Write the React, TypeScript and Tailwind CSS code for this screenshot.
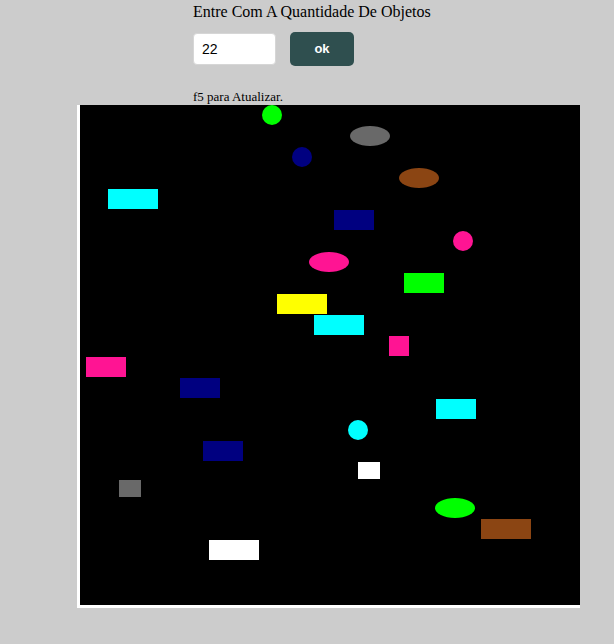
import React from 'react';

type Shape =
  | { kind: 'rect'; x: number; y: number; w: number; h: number; color: string }
  | { kind: 'ellipse'; cx: number; cy: number; rx: number; ry: number; color: string };

// coordenadas relativas ao canvas (500x500)
const shapes: Shape[] = [
  { kind: 'ellipse', cx: 192, cy: 10, rx: 10, ry: 10, color: '#00ff00' },
  { kind: 'ellipse', cx: 290, cy: 31, rx: 20, ry: 10, color: '#696969' },
  { kind: 'ellipse', cx: 222, cy: 52, rx: 10, ry: 10, color: '#000080' },
  { kind: 'ellipse', cx: 339, cy: 73, rx: 20, ry: 10, color: '#8b4513' },
  { kind: 'rect', x: 28, y: 84, w: 50, h: 20, color: '#00ffff' },
  { kind: 'rect', x: 254, y: 105, w: 40, h: 20, color: '#000080' },
  { kind: 'ellipse', cx: 383, cy: 136, rx: 10, ry: 10, color: '#ff1493' },
  { kind: 'ellipse', cx: 249, cy: 157, rx: 20, ry: 10, color: '#ff1493' },
  { kind: 'rect', x: 324, y: 168, w: 40, h: 20, color: '#00ff00' },
  { kind: 'rect', x: 197, y: 189, w: 50, h: 20, color: '#ffff00' },
  { kind: 'rect', x: 234, y: 210, w: 50, h: 20, color: '#00ffff' },
  { kind: 'rect', x: 309, y: 231, w: 20, h: 20, color: '#ff1493' },
  { kind: 'rect', x: 6, y: 252, w: 40, h: 20, color: '#ff1493' },
  { kind: 'rect', x: 100, y: 273, w: 40, h: 20, color: '#000080' },
  { kind: 'rect', x: 356, y: 294, w: 40, h: 20, color: '#00ffff' },
  { kind: 'ellipse', cx: 278, cy: 325, rx: 10, ry: 10, color: '#00ffff' },
  { kind: 'rect', x: 123, y: 336, w: 40, h: 20, color: '#000080' },
  { kind: 'rect', x: 278, y: 357, w: 22, h: 17, color: '#ffffff' },
  { kind: 'rect', x: 39, y: 375, w: 22, h: 17, color: '#696969' },
  { kind: 'ellipse', cx: 375, cy: 403, rx: 20, ry: 10, color: '#00ff00' },
  { kind: 'rect', x: 401, y: 414, w: 50, h: 20, color: '#8b4513' },
  { kind: 'rect', x: 129, y: 435, w: 50, h: 20, color: '#ffffff' },
];

export default function App() {
  return (
    <div className="min-h-screen bg-[#cccccc] pb-[36px]">
      {/* Formulario */}
      <div className="pl-[193px] pt-[3px]">
        <h1 className="text-[16px] leading-[18px] text-black font-['Liberation_Serif',serif]">
          Entre Com A Quantidade De Objetos
        </h1>
        <div className="mt-[11px] flex items-center gap-[14px]">
          <input
            defaultValue="22"
            className="h-[32px] w-[83px] rounded-[4px] border border-[#d6d6d6] bg-white px-[8px] text-[14px] text-black outline-none font-['Liberation_Sans',Arial,sans-serif]"
          />
          <button className="h-[34px] w-[64px] rounded-[5px] bg-[#2f4f4f] text-[13px] font-bold text-white font-['Liberation_Sans',Arial,sans-serif]">
            ok
          </button>
        </div>
        <p className="mt-[23px] text-[13px] leading-[15px] text-black font-['Liberation_Serif',serif]">
          f5 para Atualizar.
        </p>
      </div>

      {/* Canvas */}
      <div className="ml-[77px] mt-[1px] w-fit border-l-[3px] border-b-[3px] border-white">
        <svg width="500" height="500" className="block bg-black">
          {shapes.map((s, i) =>
            s.kind === 'rect' ? (
              <rect key={i} x={s.x} y={s.y} width={s.w} height={s.h} fill={s.color} />
            ) : (
              <ellipse key={i} cx={s.cx} cy={s.cy} rx={s.rx} ry={s.ry} fill={s.color} />
            )
          )}
        </svg>
      </div>
    </div>
  );
}
